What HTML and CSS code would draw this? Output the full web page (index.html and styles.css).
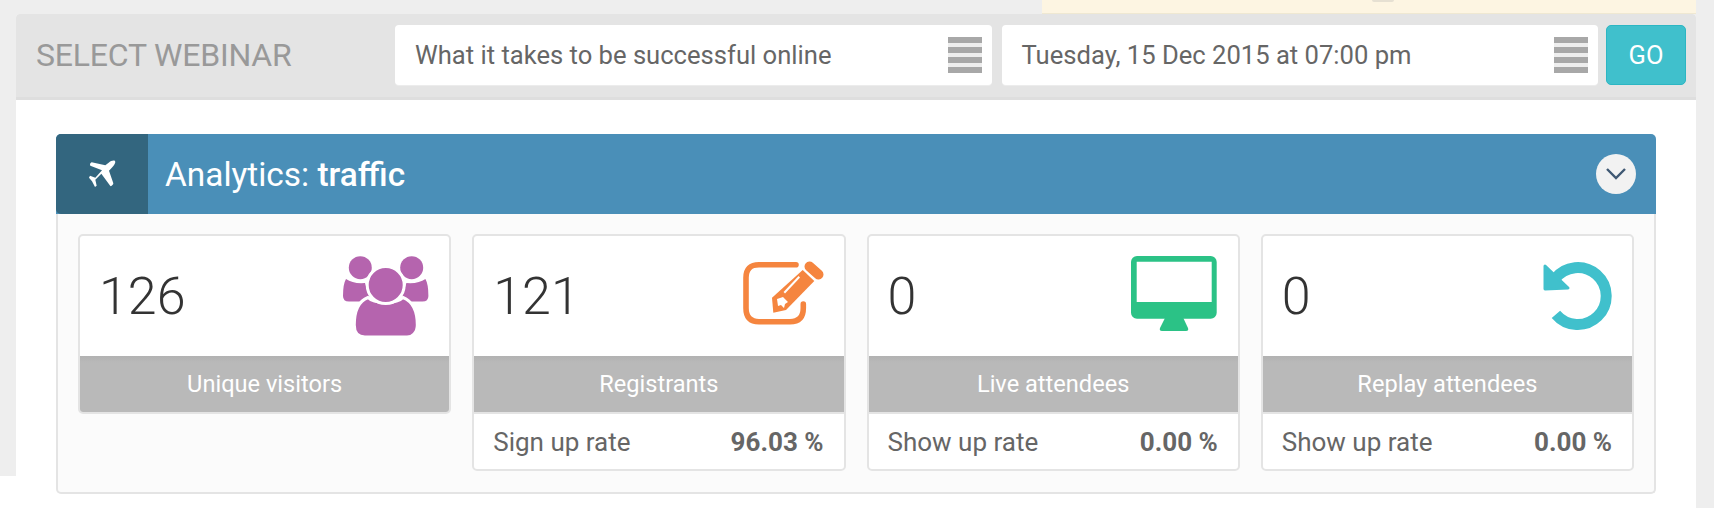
FILE: index.html
```html
<!DOCTYPE html>
<html lang="en">
<head>
  <meta charset="UTF-8">
  <title>Select webinar - Analytics</title>
  <link rel="stylesheet" href="styles.css">
</head>
<body>

<div class="notice"><span class="notice-dot"></span></div>

<div class="panel">
  <!-- Webinar picker -->
  <div class="picker">
    <div class="picker-title">SELECT WEBINAR</div>
    <div class="select-box"><span>What it takes to be successful online</span><i class="bars"></i></div>
    <div class="select-box"><span>Tuesday, 15 Dec 2015 at 07:00 pm</span><i class="bars"></i></div>
    <button class="btn-go">GO</button>
  </div>

  <div class="content">
    <div class="section-head">
      <div class="section-icon">
        <svg width="28" height="28" viewBox="108 93 84 84"><path fill="#fff" d="M189 96C192 101 186 110 178 118L171 125L184 163C184 167 178 173 175 171L148 134L130 152L134 170L129 174L120 157L111 146L114 140L130 146L150 124L115 110C112 106 116 101 119 100L160 109L170 101C176 96 185 93 189 96Z"/></svg>
      </div>
      <h2 class="section-title">Analytics: <b>traffic</b></h2>
      <span class="toggle">
        <svg width="20" height="12" viewBox="0 0 20 12"><path d="M1 1l9 9 9-9" fill="none" stroke="#3f5873" stroke-width="2.4"/></svg>
      </span>
    </div>

    <div class="section-body">
      <div class="card card-short">
        <div class="card-top">
          <span class="num">126</span>
          <svg class="stat-icon" viewBox="0 0 88 80" fill="#b564ae">
            <circle cx="19.3" cy="11.7" r="11.5"/>
            <circle cx="70.7" cy="11.7" r="11.5"/>
            <path d="M5 23Q12 28 24 27L30 45.5H8Q2 45.5 2 40Q2 28 5 23Z"/>
            <path d="M84.4 23Q77.4 28 65.4 27L59.4 45.5H81.4Q87.4 45.5 87.4 40Q87.4 28 84.4 23Z"/>
            <path stroke="#fff" stroke-width="3" d="M13.3 69C13.3 55 18 45 27 41.5C33 48 56 48 62 41.5C71 45 76.3 55 76.3 69C76.3 77 71 81 66 81H24C18 81 13.3 77 13.3 69Z"/>
            <circle cx="44.7" cy="29" r="18.5" stroke="#fff" stroke-width="3"/>
          </svg>
        </div>
        <div class="card-label">Unique visitors</div>
      </div>

      <div class="card">
        <div class="card-top">
          <span class="num">121</span>
          <svg class="stat-icon" viewBox="0 0 88 80" fill="#f5853f">
            <path fill="none" stroke="#f5853f" stroke-width="5.6" stroke-linecap="round" d="M60 8.7H23Q10 8.7 10 21.7V52Q10 65.7 23 65.7H54Q67.3 65.7 67.3 52V48"/>
            <path d="M37.3 56.7L36 41.7L66.7 14L78.3 25L50 54Z"/>
            <path stroke="#fff" stroke-width="2" d="M48.3 36.7L63.3 20.7"/>
            <path fill="#fff" d="M41 43l6-2 5 5-3 2-1 4-3-3-3 1z"/>
            <path stroke="#f5853f" stroke-width="10" stroke-linecap="round" d="M73.5 10.5L82.5 18.5"/>
          </svg>
        </div>
        <div class="card-label">Registrants</div>
        <div class="card-rate"><span>Sign up rate</span><b>96.03 %</b></div>
      </div>

      <div class="card">
        <div class="card-top">
          <span class="num">0</span>
          <svg class="stat-icon" viewBox="0 0 88 80" fill="#2bc286">
            <path fill-rule="evenodd" d="M7 0H80.7A6 6 0 0 1 86.7 6V56.7A6 6 0 0 1 80.7 62.7H7A6 6 0 0 1 1 56.7V6A6 6 0 0 1 7 0ZM6.7 5.7V46H81.7V5.7Z"/>
            <path d="M35 62H53.3L58 72Q59 75 56 75H32Q29 75 30 72Z"/>
          </svg>
        </div>
        <div class="card-label">Live attendees</div>
        <div class="card-rate"><span>Show up rate</span><b>0.00 %</b></div>
      </div>

      <div class="card">
        <div class="card-top">
          <span class="num">0</span>
          <svg class="stat-icon" viewBox="0 0 88 80" fill="#40c0cc">
            <path fill="none" stroke="#40c0cc" stroke-width="11" d="M31.9 58.4A28.5 28.5 0 1 0 31 22.8"/>
            <path stroke="#40c0cc" stroke-width="3" stroke-linejoin="round" d="M21 10L44 32L21 33Z"/>
          </svg>
        </div>
        <div class="card-label">Replay attendees</div>
        <div class="card-rate"><span>Show up rate</span><b>0.00 %</b></div>
      </div>
    </div>
  </div>
</div>

</body>
</html>
```

FILE: styles.css
```css
html, body {
  height: 100%;
}

body {
  margin: 0;
  overflow: hidden;
  font-family: 'Roboto', sans-serif;
  color: #666;
  background: linear-gradient(#fff, #fff) 0 476px / 16px 32px no-repeat, #eee;
}

.notice {
  height: 13px;
  width: 654px;
  margin-left: 1042px;
  background: #fdf5e2;
  border-bottom: 1px solid #efe8d2;
  display: flex;
  justify-content: center;
}

.notice-dot {
  width: 22px;
  height: 2px;
  margin-left: 28px;
  background: #e6e0d2;
  border-radius: 0 0 11px 11px;
}

.panel {
  width: 1680px;
  height: 494px;
  margin-left: 16px;
  background: #fff;
  border-radius: 4px 4px 0 0;
}

.picker {
  display: flex;
  align-items: center;
  gap: 10px;
  height: 83px;
  padding-right: 10px;
  background: #e4e4e4;
  border-bottom: 3px solid #dedede;
  border-radius: 4px 4px 0 0;
}

.picker-title {
  width: 349px;
  padding: 0 0 2px 20px;
  font-size: 32px;
  color: #999;
  letter-spacing: -0.2px;
}

.select-box {
  flex: 1;
  display: flex;
  align-items: center;
  justify-content: space-between;
  height: 60px;
  padding: 0 10px 0 20px;
  font-size: 25.6px;
  background: #fff;
  border-radius: 4px;
  margin-top: -1px;
  box-shadow: 0 1px 0 #ececec;
}

.bars {
  width: 34px;
  height: 36px;
  background: repeating-linear-gradient(#a8a8a8 0 6px, #eee 6px 10px);
}

.btn-go {
  width: 80px;
  height: 60px;
  margin: -1px 0 0 -2px;
  padding: 0;
  font-family: inherit;
  font-size: 25.5px;
  color: #fff;
  background: #40c0cc;
  border: 1px solid #2cb6c3;
  border-radius: 5px;
}

.content {
  padding: 34px 40px 0;
}

.section-head {
  display: flex;
  align-items: center;
  height: 80px;
  background: #4a8fb8;
  border-radius: 5px 5px 0 0;
}

.section-icon {
  display: flex;
  align-items: center;
  justify-content: center;
  width: 92px;
  height: 80px;
  background: #33667f;
  border-radius: 5px 0 0 5px;
}

.section-title {
  flex: 1;
  margin: 0 0 0 17px;
  font-size: 33.4px;
  font-weight: 400;
  color: #fff;
}

.section-title b {
  font-weight: 500;
}

.toggle {
  display: flex;
  align-items: center;
  justify-content: center;
  width: 40px;
  height: 40px;
  margin-right: 20px;
  background: #f2f2f2;
  border-radius: 50%;
}

.section-body {
  display: grid;
  grid-template-columns: repeat(4, 1fr);
  gap: 21px;
  align-items: start;
  padding: 20px 20px 21px;
  background: #fbfbfb;
  border: 2px solid #e4e4e4;
  border-top: 0;
  border-radius: 0 0 5px 5px;
}

.card {
  background: #fff;
  border: 2px solid #e4e4e4;
  border-radius: 5px;
  overflow: hidden;
}

.card-top {
  display: flex;
  align-items: center;
  justify-content: space-between;
  height: 120px;
  padding: 0 20px 0 19px;
}

.num {
  font-size: 52px;
  font-weight: 300;
  color: #333;
}

.stat-icon {
  width: 88px;
  height: 80px;
  margin-top: -1px;
}

.card-label {
  height: 56px;
  line-height: 56px;
  font-size: 23.6px;
  text-align: center;
  color: #fff;
  background: linear-gradient(#b2b2b2, #b9b9b9 12%);
}

.card-rate {
  display: flex;
  align-items: center;
  justify-content: space-between;
  height: 55px;
  padding: 0 20px 0 19px;
  font-size: 26px;
  border-top: 2px solid #e4e4e4;
}

.card-rate b {
  font-weight: 700;
}
```
